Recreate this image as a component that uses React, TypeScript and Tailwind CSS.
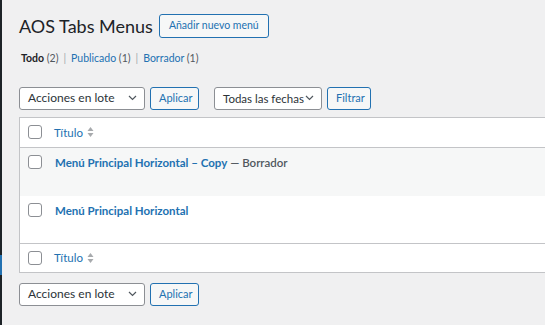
import type { ReactNode } from "react";

const Chevron = () => (
  <svg width="9" height="6" viewBox="0 0 9 6" className="shrink-0">
    <path d="M1 1l3.5 3.5L8 1" fill="none" stroke="#50575e" strokeWidth="1.2" />
  </svg>
);

const SortIcon = () => (
  <svg width="7" height="12" viewBox="0 0 7 12" className="ml-1">
    <path d="M3.5 1L6.5 5H0.5z" fill="#a7aaad" />
    <path d="M3.5 11L6.5 7H0.5z" fill="#a7aaad" />
  </svg>
);

const Checkbox = () => (
  <span className="block w-[14px] h-[14px] rounded-[3px] border border-[#8c8f94] bg-white shrink-0" />
);

const Select = ({ label, width }: { label: string; width: string }) => (
  <div
    className={`flex items-center justify-between h-[23px] pl-2 pr-[7px] border border-[#8c8f94] rounded-[3px] bg-white text-[#2c3338] whitespace-nowrap ${width}`}
  >
    <span>{label}</span>
    <Chevron />
  </div>
);

const Button = ({ children, className = "" }: { children: ReactNode; className?: string }) => (
  <button
    className={`h-[23px] px-2 border border-[#2271b1] rounded-[3px] bg-[#f6f7f7] text-[11px] text-[#2271b1] whitespace-nowrap ${className}`}
  >
    {children}
  </button>
);

export default function App() {
  return (
    <div
      className="flex w-[545px] h-[325px] bg-[#f0f0f1] overflow-hidden"
      style={{ fontFamily: 'Lato, "Noto Sans", sans-serif' }}
    >
      {/* barra lateral del admin */}
      <div className="w-[2px] shrink-0 bg-[#1d2327] flex flex-col">
        <div className="h-[255px]" />
        <div className="h-[20px] bg-[#2271b1]" />
      </div>

      <div className="flex-1 pl-[17px] pt-[14px] min-w-0">
        {/* Cabecera */}
        <div className="flex items-center gap-[6px]">
          <h1 className="text-[18px] leading-[24px] text-[#1d2327]">AOS Tabs Menus</h1>
          <Button className="h-[24px] !text-[10.5px] !px-[9px]">Añadir nuevo menú</Button>
        </div>

        {/* Filtros de estado */}
        <ul className="flex items-center mt-[13px] pl-[2px] text-[10.5px] text-[#50575e]">
          <li>
            <span className="font-bold text-[#1d2327]">Todo</span> (2)
            <span className="mx-[5px] text-[#a7aaad]">|</span>
          </li>
          <li>
            <span className="text-[#2271b1]">Publicado</span> (1)
            <span className="mx-[5px] text-[#a7aaad]">|</span>
          </li>
          <li>
            <span className="text-[#2271b1]">Borrador</span> (1)
          </li>
        </ul>

        {/* Acciones superiores */}
        <div className="flex items-center mt-[20px]">
          <Select label="Acciones en lote" width="w-[126px] text-[12px]" />
          <Button className="ml-[5px] w-[49px]">Aplicar</Button>
          <Select label="Todas las fechas" width="w-[108px] ml-[15px] text-[11.5px]" />
          <Button className="ml-[5px] w-[44px]">Filtrar</Button>
        </div>

        {/* Tabla */}
        <div className="mt-[7px] border border-r-0 border-[#c3c4c7] bg-white">
          <div className="flex items-center h-[30px] border-b border-[#c3c4c7] pl-[8px]">
            <Checkbox />
            <span className="ml-[12px] text-[#2271b1] text-[11.5px]">Título</span>
            <SortIcon />
          </div>
          <div className="flex items-start h-[48px] bg-[#f6f7f7] pl-[8px] pt-[7px]">
            <Checkbox />
            <span className="ml-[13px] -mt-[1px] text-[11.5px] font-bold">
              <span className="text-[#2271b1]">Menú Principal Horizontal – Copy</span>
              <span className="font-semibold text-[#50575e]"> — Borrador</span>
            </span>
          </div>
          <div className="flex items-start h-[47px] pl-[8px] pt-[7px]">
            <Checkbox />
            <span className="ml-[13px] -mt-[1px] text-[11.5px] font-bold text-[#2271b1]">
              Menú Principal Horizontal
            </span>
          </div>
          <div className="flex items-center h-[29px] border-t border-[#c3c4c7] pl-[8px]">
            <Checkbox />
            <span className="ml-[12px] text-[#2271b1] text-[11.5px]">Título</span>
            <SortIcon />
          </div>
        </div>

        {/* Acciones inferiores */}
        <div className="flex items-center mt-[10px]">
          <Select label="Acciones en lote" width="w-[126px] text-[12px]" />
          <Button className="ml-[5px] w-[49px]">Aplicar</Button>
        </div>
      </div>
    </div>
  );
}
